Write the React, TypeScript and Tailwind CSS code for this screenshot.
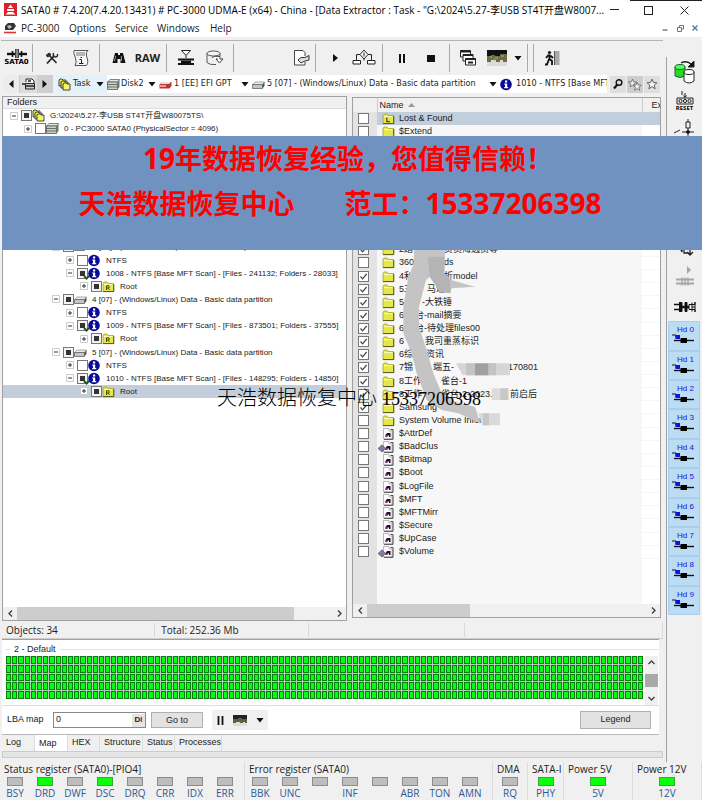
import { ReactNode, useState } from "react";

type Check = "off" | "on" | "partial";
type IconName = "files" | "disk" | "drive" | "info" | "root" | "folder" | "lost" | "file" | "fileStream";

type TreeRow = {
  level: number;
  open: boolean;
  check: Check;
  mark?: boolean;
  icon: IconName;
  text: string;
  selected?: boolean;
};

// [text, width of the column it takes]
type NamePart = [string, number?];
type FileRow = { icon: IconName; check: Check; name: NamePart[]; selected?: boolean };

const uiFont = "font-['Open_Sans','Noto_Sans','Noto_Sans_CJK_SC',sans-serif]";
const listFont = "font-['Liberation_Sans','Noto_Sans_CJK_SC',sans-serif]";

const treeTop: TreeRow[] = [
  { level: 0, open: true, check: "partial", icon: "files", text: "G:\\2024\\5.27-李USB ST4T开盘W80075TS\\" },
  { level: 1, open: false, check: "off", icon: "disk", text: "0 - PC3000 SATA0 (PhysicalSector = 4096)" },
];

const treeBottom: TreeRow[] = [
  { level: 3, open: true, check: "partial", icon: "drive", text: "3 [07] - (Windows/Linux) Data - Basic data partition" },
  { level: 4, open: false, check: "off", icon: "info", text: "NTFS" },
  { level: 4, open: true, check: "partial", mark: true, icon: "info", text: "1008 - NTFS [Base MFT Scan] - [Files - 241132; Folders - 28033]" },
  { level: 5, open: false, check: "partial", icon: "root", text: "Root" },
  { level: 3, open: true, check: "partial", icon: "drive", text: "4 [07] - (Windows/Linux) Data - Basic data partition" },
  { level: 4, open: false, check: "off", icon: "info", text: "NTFS" },
  { level: 4, open: true, check: "partial", mark: true, icon: "info", text: "1009 - NTFS [Base MFT Scan] - [Files - 873501; Folders - 37555]" },
  { level: 5, open: false, check: "partial", icon: "root", text: "Root" },
  { level: 3, open: true, check: "partial", icon: "drive", text: "5 [07] - (Windows/Linux) Data - Basic data partition" },
  { level: 4, open: false, check: "off", icon: "info", text: "NTFS" },
  { level: 4, open: true, check: "partial", mark: true, icon: "info", text: "1010 - NTFS [Base MFT Scan] - [Files - 148295; Folders - 14850]" },
  { level: 5, open: false, check: "partial", icon: "root", text: "Root", selected: true },
];

const filesTop: FileRow[] = [
  { icon: "lost", check: "off", name: [["Lost & Found"]], selected: true },
  { icon: "folder", check: "off", name: [["$Extend"]] },
];

const filesBottom: FileRow[] = [
  { icon: "folder", check: "on", name: [["2踏", 45], ["贵员海选员等"]] },
  { icon: "folder", check: "off", name: [["360", 45], ["ds"]] },
  { icon: "folder", check: "on", name: [["4利", 45], ["折model"]] },
  { icon: "folder", check: "on", name: [["5三", 28], ["马瑞"]] },
  { icon: "folder", check: "on", name: [["5", 23], ["-大铁锤"]] },
  { icon: "folder", check: "on", name: [["6", 16], ["台-mail摘要"]] },
  { icon: "folder", check: "on", name: [["6", 16], ["台-待处理files00"]] },
  { icon: "folder", check: "on", name: [["6", 26], ["我司重蒸标识"]] },
  { icon: "folder", check: "on", name: [["6综", 27], ["资讯"]] },
  { icon: "folder", check: "on", name: [["7锦", 34], ["端五-", 75], ["170801"]] },
  { icon: "folder", check: "on", name: [["8工作", 42], ["雀台-1"]] },
  { icon: "folder", check: "on", name: [["8工作", 42], ["雀台-2-2023.1", 69], ["前启后"]] },
  { icon: "folder", check: "on", name: [["Samsung"]] },
  { icon: "folder", check: "off", name: [["System Volume Inform"]] },
  { icon: "file", check: "off", name: [["$AttrDef"]] },
  { icon: "fileStream", check: "off", name: [["$BadClus"]] },
  { icon: "file", check: "off", name: [["$Bitmap"]] },
  { icon: "file", check: "off", name: [["$Boot"]] },
  { icon: "file", check: "off", name: [["$LogFile"]] },
  { icon: "file", check: "off", name: [["$MFT"]] },
  { icon: "file", check: "off", name: [["$MFTMirr"]] },
  { icon: "file", check: "off", name: [["$Secure"]] },
  { icon: "file", check: "off", name: [["$UpCase"]] },
  { icon: "fileStream", check: "off", name: [["$Volume"]] },
];

const registers: { title: string; leds: [string, boolean][] }[] = [
  {
    title: "Status register (SATA0)-[PIO4]",
    leds: [["BSY", false], ["DRD", true], ["DWF", false], ["DSC", true], ["DRQ", false], ["CRR", false], ["IDX", false], ["ERR", false]],
  },
  {
    title: "Error register (SATA0)",
    leds: [["BBK", false], ["UNC", false], ["", false], ["INF", false], ["", false], ["ABR", false], ["TON", false], ["AMN", false]],
  },
  { title: "DMA", leds: [["RQ", false]] },
  { title: "SATA-I", leds: [["PHY", true]] },
  { title: "Power 5V", leds: [["5V", true]] },
  { title: "Power 12V", leds: [["12V", true]] },
];

const indents = ["pl-[7px]", "pl-[21px]", "pl-[35px]", "pl-[49px]", "pl-[63px]", "pl-[77px]"];

function FolderShape() {
  return (
    <>
      <path d="M1 3.5 L2 2 H5 L6 3.5 H11.5 V11.5 H1 Z" fill="#e4e64a" stroke="#a3a32a" strokeWidth="0.8" />
      <path d="M2 4.6 H10.6" stroke="#fbfcb4" />
      <path d="M1 11.6 H11.8 V4" stroke="#55551c" fill="none" />
    </>
  );
}

function RowIcon({ name }: { name: IconName }) {
  return (
    <svg viewBox="0 0 13 13" className="h-[13px] w-[13px] shrink-0 overflow-visible">
      {name === "files" && (
        <>
          <path d="M1 2 L2 1 H4 L5 2 H8 V8 H1 Z" fill="#e4e64a" stroke="#333" strokeWidth="0.9" />
          <path d="M3 4 L4 3 H6 L7 4 H10 V10 H3 Z" fill="#e4e64a" stroke="#333" strokeWidth="0.9" />
          <path d="M5 6 L6 5 H8 L9 6 H12 V12 H5 Z" fill="#f4f56a" stroke="#333" strokeWidth="0.9" />
        </>
      )}
      {name === "disk" && (
        <>
          <path d="M3 1.5 H12.5 L10.5 4 H0.5 Z" fill="#e2eee0" stroke="#666" strokeWidth="0.8" />
          <path d="M0.5 4 H10.5 V11.5 H0.5 Z" fill="#c5d3c3" stroke="#555" strokeWidth="0.8" />
          <path d="M10.5 4 L12.5 1.5 V9 L10.5 11.5 Z" fill="#6f7d6d" />
          <path d="M0.5 6.5 H10.5 M0.5 9 H10.5" stroke="#555" strokeWidth="0.8" />
        </>
      )}
      {name === "drive" && (
        <>
          <path d="M3 4 H12.5 L10.5 6.5 H0.5 Z" fill="#ececec" stroke="#888" strokeWidth="0.7" />
          <path d="M0.5 6.5 H10.5 V10.5 H0.5 Z" fill="#c4c4c4" stroke="#666" strokeWidth="0.8" />
          <path d="M10.5 6.5 L12.5 4 V8 L10.5 10.5 Z" fill="#555" />
        </>
      )}
      {name === "info" && (
        <>
          <circle cx="6" cy="6.5" r="5.8" fill="#0a0a9a" />
          <path d="M5 2.6 H7.2 V4.4 H5 Z M4.2 5.4 H7.2 V9 H8.2 V10.2 H4.2 V9 H5 V6.6 H4.2 Z" fill="#fff" />
        </>
      )}
      {(name === "folder" || name === "root" || name === "lost") && <FolderShape />}
      {name === "root" && <path d="M4.5 10 V5.8 H7 V8 H4.5 M6 8 L7.6 10" stroke="#4a4a00" fill="none" />}
      {name === "lost" && <path d="M4.8 5.5 V9.6 H7.8" stroke="#4a4a00" strokeWidth="1.2" fill="none" />}
      {(name === "file" || name === "fileStream") && (
        <>
          <path d="M1.5 1.5 H7 V4 H10 V12 H1.5 Z" fill="#fff" stroke="#aaa" strokeWidth="0.8" />
          <path d="M8.5 2.5 H11 V12.3 H2" fill="none" stroke="#444" />
          <path d="M3.5 10 V8 L5 6 H8.5 V10 H7 V8.5 H5.5 V10 Z" fill="#33052e" />
          <path d="M3 8 H4.6 V10 H3 Z" fill="#b54ac0" />
        </>
      )}
      {name === "fileStream" && <path d="M-4 8.5 L0 4.8 L3.5 8.5 L0 12 Z" fill="#7d7fa6" stroke="#444" strokeWidth="0.6" />}
    </svg>
  );
}

function CheckBox({ state, label, mark }: { state: Check; label: string; mark?: boolean }) {
  const [value, setValue] = useState<Check>(state);
  return (
    <span className="grid h-[11px] w-[11px] shrink-0">
      <input
        type="checkbox"
        aria-label={label}
        checked={value !== "off"}
        onChange={() => setValue(value === "off" ? "on" : "off")}
        className={
          value === "partial"
            ? "h-[11px] w-[11px] appearance-none border border-[#777] bg-[#333] shadow-[inset_0_0_0_2px_#f4f4f4] [grid-area:1/1]"
            : "h-[11px] w-[11px] appearance-none border border-[#777] bg-white [grid-area:1/1]"
        }
      />
      {value === "on" && (
        <svg viewBox="0 0 11 11" className="pointer-events-none h-[11px] w-[11px] [grid-area:1/1]">
          <path d="M2.5 5.5 L4.6 7.8 L8.6 3" fill="none" stroke="#444" strokeWidth="1.2" />
        </svg>
      )}
      {mark && (
        <svg viewBox="0 0 11 11" className="pointer-events-none h-[11px] w-[11px] overflow-visible [grid-area:1/1]">
          <path d="M7 8 L9.5 10.5 L12 8" fill="none" stroke="#1d5b1d" strokeWidth="2" />
        </svg>
      )}
    </span>
  );
}

function TreeItem({ row }: { row: TreeRow }) {
  return (
    <li
      className={`flex min-w-0 items-center overflow-hidden whitespace-nowrap ${indents[row.level]} ${
        row.selected ? "bg-[#c2cedb]" : ""
      }`}
    >
      <button type="button" aria-label={row.open ? "Collapse" : "Expand"} className="mr-[3px] h-2 w-2 shrink-0">
        <svg viewBox="0 0 8 8" className="h-2 w-2">
          <path d="M0.5 0.5 H7.5 V7.5 H0.5 Z" fill="#fff" stroke="#ccc" />
          <path d={row.open ? "M2 4 H6" : "M2 4 H6 M4 2 V6"} stroke="#333" />
        </svg>
      </button>
      <CheckBox state={row.check} label={row.text} mark={row.mark} />
      <RowIcon name={row.icon} />
      <span className="ml-[5px]">{row.text}</span>
    </li>
  );
}

function FileItem({ row }: { row: FileRow }) {
  return (
    <tr>
      <td className="bg-[#e3e3e3] p-0">
        <div className="flex pl-[5px]">
          <CheckBox state={row.check} label={row.name[0][0]} />
        </div>
      </td>
      <td className={row.selected ? "bg-[#c2cedb] p-0" : "bg-[#f7f7f7] p-0"}>
        <div className="flex h-[13px] items-center overflow-hidden pl-[5px] whitespace-nowrap">
          <RowIcon name={row.icon} />
          <span className="ml-1 flex">
            {row.name.map(([text, width]) => (
              <span key={text} style={{ width }}>
                {text}
              </span>
            ))}
          </span>
        </div>
      </td>
      <td className={row.selected ? "bg-[#c2cedb] p-0" : "border-b border-[#f3f7fa] bg-white p-0"} />
    </tr>
  );
}

function ToolGroup({ children }: { children: ReactNode }) {
  return <div className="flex h-7 shrink-0 items-center border-r border-[#a8a8a8] px-1">{children}</div>;
}

function Tool({ label, children }: { label: string; children: ReactNode }) {
  return (
    <button type="button" aria-label={label} className="flex h-6 w-[29px] items-center justify-center">
      {children}
    </button>
  );
}

function Glyph({ children }: { children: ReactNode }) {
  return (
    <svg viewBox="0 0 20 20" className="h-5 w-5 overflow-visible" fill="none" stroke="#222">
      {children}
    </svg>
  );
}

function Caret() {
  return (
    <svg viewBox="0 0 8 5" className="h-[5px] w-2 shrink-0">
      <path d="M0.5 0 H7.5 L4 4.5 Z" fill="#111" />
    </svg>
  );
}

function Picture() {
  return (
    <svg viewBox="0 0 20 16" className="h-4 w-5">
      <path d="M0 0 H20 V12 H0 Z" fill="#111" />
      <path d="M0 6 H4 V5 H8 V6 H13 V4 H20 V13 H0 Z" fill="#6d6b48" />
      <path d="M0 12 H4 V10 H9 V12 H13 V10 H16 V12 H20 V16 H0 Z" fill="#dcdcd4" />
      <path d="M3 7 H5 M8 8 H11 M14 6 H17 M6 10 H8" stroke="#b5b285" />
    </svg>
  );
}

function PathArrow() {
  return (
    <button type="button" aria-label="Open list" className="flex h-4 w-[14px] shrink-0 items-center justify-center">
      <Caret />
    </button>
  );
}

function Toolbar() {
  return (
    <div className="mt-[3px] ml-[1px] flex h-[34px] shrink-0 items-center overflow-hidden border-t border-[#b4b4b4] pt-[1px]">
      <div className="flex h-7 w-[32px] shrink-0 items-center border-r border-[#a8a8a8]">
        <button type="button" className="flex w-[31px] flex-col items-center">
          <svg viewBox="0 0 22 9" className="h-[9px] w-[22px]">
            <path d="M1 5 H21" stroke="#111" strokeWidth="2.4" />
            <path d="M6.5 2 V8 M15.5 2 V8" stroke="#111" strokeWidth="1.6" />
            <path d="M9.5 0 H12.5 V9 H9.5 Z" stroke="#444" fill="#888" />
          </svg>
          <span className="font-['DejaVu_Sans',sans-serif] text-[7px] leading-[9px] font-bold text-black">SATA0</span>
        </button>
      </div>
      <ToolGroup>
        <Tool label="Settings">
          <Glyph>
            <path d="M5 15.5 L12 8" strokeWidth="1.8" />
            <path d="M14.5 15 L7.5 7.5" strokeWidth="1.6" />
            <path d="M4 7.5 L7 5 L9 6.5 L6 9 Z" fill="#333" />
            <path d="M11.5 5 Q10.5 8 13 9 Q16 9 15.5 6" strokeWidth="1.3" />
          </Glyph>
        </Tool>
        <Tool label="Script information">
          <Glyph>
            <path d="M3 2.5 H17 Q14.5 4 15.5 8 Q18 14 15.5 17.5 H4 Q6 15 4.5 10 Q2 5 3 2.5 Z" fill="#f6f6f6" stroke="#555" />
            <path d="M5 5 H14 M5 7 H14" stroke="#777" />
            <path d="M8.5 11.5 H10.5 V15.5 M8 15.5 H12.5 M9.5 9.5 H11" />
          </Glyph>
        </Tool>
      </ToolGroup>
      <ToolGroup>
        <Tool label="Search">
          <Glyph>
            <path d="M6 5 H9 V7 H11 V5 H14 L16.5 15 H11.5 V11 H8.5 V15 H3.5 Z" fill="#111" stroke="none" />
            <path d="M5.5 13 L6.8 8 M12.5 13 L12.3 8" stroke="#bbb" strokeWidth="0.8" />
          </Glyph>
        </Tool>
        <button type="button" className="flex h-6 w-[29px] items-center justify-center text-[11px] font-bold text-[#222]">
          RAW
        </button>
      </ToolGroup>
      <ToolGroup>
        <Tool label="Exchange">
          <Glyph>
            <path d="M5.5 2.5 H14.5 L10 7.5 Z" fill="#fff" />
            <path d="M10 7.5 V10" />
            <path d="M2 11.5 H18 M2 16 H18" stroke="#111" strokeWidth="2.2" />
            <path d="M5 13.8 H15" stroke="#111" strokeWidth="2.4" />
          </Glyph>
        </Tool>
        <Tool label="Copy disk">
          <Glyph>
            <ellipse cx="8.5" cy="5.5" rx="6.5" ry="2.5" fill="#f6f6f6" stroke="#555" />
            <path d="M2 5.5 V14.5 Q5 17 9 16.5 H11 M15 5.5 V8" stroke="#555" />
            <path d="M7 9.5 Q9 7.5 15 8.5 V11 H18 L14.5 15 L11 11 H13" fill="#fff" stroke="#444" />
          </Glyph>
        </Tool>
      </ToolGroup>
      <div className="flex h-7 w-[82px] shrink-0 items-center justify-end border-r border-[#a8a8a8]">
        <Tool label="Export">
          <Glyph>
            <path d="M14 8 V4.5 L12 2.5 H3.5 V17 H14 V14" fill="#fff" stroke="#444" />
            <path d="M7 12 L10 9.5 H14 L18 7.5 V12 L14 13 L10 15 Z" fill="#ddd" stroke="#333" />
          </Glyph>
        </Tool>
      </div>
      <ToolGroup>
        <Tool label="Start">
          <Glyph>
            <path d="M8 6 L13 10 L8 14 Z" fill="#111" stroke="none" />
          </Glyph>
        </Tool>
        <Tool label="Task map">
          <Glyph>
            <path d="M10 2 L14 6.5 L10 11 L6 6.5 Z" fill="#fff" />
            <path d="M10 4.5 V8.5 M10 11 V12.5 M6 6.5 H2.5 V12 M14 6.5 H17.5 V12" />
            <path d="M-1 12.5 H6.5 V16 H-1 Z M13.5 12.5 H21 V16 H13.5 Z" fill="#fff" />
          </Glyph>
        </Tool>
      </ToolGroup>
      <ToolGroup>
        <Tool label="Pause">
          <Glyph>
            <path d="M8 6 V15 M12 6 V15" stroke="#111" strokeWidth="2" />
          </Glyph>
        </Tool>
        <Tool label="Stop">
          <Glyph>
            <path d="M6 7 H14 V14 H6 Z" fill="#111" stroke="none" />
          </Glyph>
        </Tool>
      </ToolGroup>
      <div className="flex h-7 shrink-0 items-center border-r border-[#a8a8a8] pr-[2px] pl-[3px]">
        <Tool label="Windows">
          <Glyph>
            <path d="M2.5 2.5 H12.5 V9 H2.5 Z" fill="#fff" />
            <path d="M2.5 3.5 H12.5" strokeWidth="2" />
            <path d="M5 6.5 H15 V13 H5 Z" fill="#fff" />
            <path d="M5 7 H15" strokeWidth="2" />
            <path d="M7.5 10.5 H17.5 V17 H7.5 Z" fill="#fff" />
            <path d="M7.5 11 H17.5 M10 14.5 H15" strokeWidth="2" />
          </Glyph>
        </Tool>
        <Tool label="Picture">
          <Picture />
        </Tool>
        <PathArrow />
      </div>
      <div className="ml-[5px] flex h-7 items-center border-l border-[#a8a8a8] px-[3px]">
        <Tool label="Exit">
          <Glyph>
            <path d="M12.5 3 H17.5 V17 H12.5 Z" fill="#a9a9a9" stroke="none" />
            <path d="M12.5 3 V17" stroke="#555" />
            <circle cx="7.5" cy="4.5" r="1.6" fill="#111" stroke="none" />
            <path d="M7.5 6.5 V11 L10 13 V17 M7 11 L5 16.5 H3 M4 10 L6 7.5 L9 8 L11 10" stroke="#111" strokeWidth="1.8" />
          </Glyph>
        </Tool>
      </div>
    </div>
  );
}

function PathBar() {
  return (
    <nav className="ml-[3px] flex h-[20px] shrink-0 items-center font-['DejaVu_Sans_Condensed','Open_Sans',sans-serif] text-[9px] whitespace-nowrap text-[#222]">
      <button type="button" aria-label="Back" className="flex h-[18px] w-[17px] shrink-0 items-center justify-center border-r border-[#ccc] bg-[#ececec]">
        <svg viewBox="0 0 6 8" className="h-2 w-[6px]">
          <path d="M5.5 0 V8 L1 4 Z" fill="#111" />
        </svg>
      </button>
      <button type="button" aria-label="Go up" className="flex h-[18px] w-[17px] shrink-0 items-center justify-center bg-[#dcdcdc]">
        <svg viewBox="0 0 14 12" className="h-3 w-[14px]" fill="none" stroke="#222">
          <path d="M4 4 V1 H10 L12 3 V5" fill="#fff" />
          <path d="M3.5 5.5 H12.5 V11 H3.5 Z" fill="#ccc" />
          <path d="M0 6 H3 M4 8 H12 M6 3 H9" strokeWidth="1.4" />
        </svg>
      </button>
      <button type="button" aria-label="Forward" className="flex h-[18px] w-4 shrink-0 items-center justify-center bg-[#cfcfcf]">
        <svg viewBox="0 0 6 8" className="h-2 w-[6px]">
          <path d="M0.5 0 V8 L5 4 Z" fill="#111" />
        </svg>
      </button>
      <div className="ml-[3px] flex h-[18px] min-w-0 flex-1 items-center overflow-hidden bg-white">
        <div className="flex h-full w-[51px] shrink-0 items-center bg-[#e3f1fb] pl-[2px]">
          <RowIcon name="files" />
          <span className="flex-1 pl-[2px]">Task</span>
          <PathArrow />
        </div>
        <div className="flex w-[52px] shrink-0 items-center">
          <RowIcon name="disk" />
          <span className="flex-1 pl-[1px]">Disk2</span>
          <PathArrow />
        </div>
        <div className="flex w-[93px] shrink-0 items-center">
          <svg viewBox="0 0 13 13" className="h-[13px] w-[13px] shrink-0">
            <path d="M3 4 H12.5 V8 L10.5 10.5 H0.5 V6.5 Z" fill="#b33" />
            <path d="M3 4 H12 L10 6 H1 Z" fill="#e8dede" />
            <path d="M1 7 H7 V9 H1 Z" fill="#e99" />
          </svg>
          <span className="flex-1 pl-[2px]">1 [EE] EFI GPT</span>
          <PathArrow />
        </div>
        <div className="flex w-[248px] shrink-0 items-center">
          <RowIcon name="drive" />
          <span className="flex-1 pl-[2px]">5 [07] - (Windows/Linux) Data - Basic data partition</span>
          <PathArrow />
        </div>
        <RowIcon name="info" />
        <span className="pl-[3px]">1010 - NTFS [Base MFT Scan]</span>
      </div>
      <div className="mr-[3px] ml-[3px] flex shrink-0 gap-[1px]">
        <button type="button" aria-label="Find" className="flex h-[17px] w-4 items-center justify-center bg-[#dedede]">
          <svg viewBox="0 0 12 12" className="h-3 w-3" fill="none" stroke="#111">
            <circle cx="7" cy="4.5" r="2.8" strokeWidth="1.4" />
            <path d="M5 7 L2 10.5" strokeWidth="2.2" />
          </svg>
        </button>
        <button type="button" aria-label="Bookmarks" className="flex h-[17px] w-4 items-center justify-center bg-[#cdcdcd]">
          <svg viewBox="0 0 14 13" className="h-[13px] w-[14px]" fill="#eee" stroke="#666" strokeWidth="0.8">
            <path d="M4.5 1 L5.6 3.8 L8.6 4 L6.2 5.9 L7 8.8 L4.5 7.2 L2 8.8 L2.8 5.9 L0.4 4 L3.4 3.8 Z" />
            <path d="M9.2 4.4 L10.3 7 L13.4 7.2 L11 9.2 L11.8 12.2 L9.2 10.6 L6.6 12.2 L7.4 9.2 L5 7.2 L8 7 Z" />
          </svg>
        </button>
        <button type="button" aria-label="Add bookmark" className="flex h-[17px] w-4 items-center justify-center bg-[#dedede]">
          <svg viewBox="0 0 12 12" className="h-3 w-3" fill="#f4f4f4" stroke="#666">
            <path d="M6 1 L7.4 4.5 L11 4.7 L8.2 7 L9.2 10.8 L6 8.7 L2.8 10.8 L3.8 7 L1 4.7 L4.6 4.5 Z" />
          </svg>
        </button>
      </div>
    </nav>
  );
}

function ScrollX({ thumb }: { thumb: string }) {
  return (
    <div className="flex h-[13px] items-center bg-[#f0f0f0]">
      <button type="button" aria-label="Scroll left" className="flex h-[13px] w-[14px] items-center justify-center">
        <svg viewBox="0 0 5 7" className="h-[7px] w-[5px]" fill="none" stroke="#444" strokeWidth="1.4">
          <path d="M4 0.5 L1 3.5 L4 6.5" />
        </svg>
      </button>
      <div className="h-full flex-1">
        <div className={`h-full bg-[#cdcdcd] ${thumb}`} />
      </div>
      <button type="button" aria-label="Scroll right" className="flex h-[13px] w-[14px] items-center justify-center">
        <svg viewBox="0 0 5 7" className="h-[7px] w-[5px]" fill="none" stroke="#444" strokeWidth="1.4">
          <path d="M1 0.5 L4 3.5 L1 6.5" />
        </svg>
      </button>
    </div>
  );
}

function FoldersPanel() {
  return (
    <section className="flex min-w-0 flex-col border border-[#a0a0a0] bg-white">
      <h2 className="h-[12px] border-b border-[#ddd] bg-[#f0f0f0] pl-1 leading-[11px]">Folders</h2>
      <ul className="grid h-[289px] grid-rows-[repeat(22,minmax(0,1fr))] text-[8px]">
        {treeTop.map((row) => (
          <TreeItem key={row.text} row={row} />
        ))}
        <li className="row-span-8" aria-hidden="true" />
        {treeBottom.map((row, i) => (
          <TreeItem key={i} row={row} />
        ))}
      </ul>
      <div className="flex-1" />
      <ScrollX thumb="w-[88%]" />
    </section>
  );
}

function FilesPanel() {
  return (
    <section className="relative mt-[1px] mb-[3px] flex min-w-0 flex-col border border-[#a0a0a0] bg-[#f7f7f7]">
      <table className="h-[461px] w-full table-fixed border-collapse">
        <colgroup>
          <col className="w-[24px]" />
          <col />
          <col className="w-[18px]" />
        </colgroup>
        <thead>
          <tr className="h-[14px] bg-[#f0f0f0] text-left">
            <th className="border-r border-[#ccc] p-0" />
            <th className="border-r border-[#ccc] p-0 pl-[2px] font-normal">
              <span className="flex items-center gap-1">
                Name
                <svg viewBox="0 0 7 4" className="h-1 w-[7px]">
                  <path d="M3.5 0 L7 4 H0 Z" fill="#999" />
                </svg>
              </span>
            </th>
            <th className="overflow-hidden p-0 pl-[9px] font-normal whitespace-nowrap">Ext</th>
          </tr>
        </thead>
        <tbody>
          {filesTop.map((row) => (
            <FileItem key={row.name[0][0]} row={row} />
          ))}
          <tr className="h-[105px]">
            <td className="bg-[#e3e3e3] p-0" />
            <td className="p-0" />
            <td className="bg-white p-0" />
          </tr>
          {filesBottom.map((row, i) => (
            <FileItem key={i} row={row} />
          ))}
        </tbody>
      </table>
      <div className="flex flex-1">
        <div className="w-[24px] bg-[#e3e3e3]" />
        <div className="flex-1" />
        <div className="w-[18px] bg-white" />
      </div>
      <ScrollX thumb="w-[37%]" />
      {/* brush strokes over parts of the names */}
      <svg viewBox="0 0 330 540" className="pointer-events-none absolute top-[152px] left-[48px] h-[180px] w-[110px]">
        <path
          d="M40 0 H132 L130 70 L150 90 L222 110 L152 115 L147 130 L117 125 L87 80 L75 90 L54 170 L54 230 L77 300 L97 370 L122 430 L162 455 L222 470 L238 520 L172 490 L122 480 L77 450 L47 370 L32 310 L7 250 L7 170 L22 80 L37 45 Z"
          fill="#c4c4c4"
        />
        <path d="M80 20 H130 V70 L148 92 V130 L117 125 L87 82 Z" fill="#b4b4b4" />
        <path d="M165 340 H327 V376 H185 Z" fill="#d6d6d6" />
        <path d="M195 340 H222 V376 H195 Z M262 340 H285 V376 H262 Z" fill="#c4c4c4" />
        <path d="M222 340 H262 V376 H222 Z" fill="#a0a0a0" />
        <path d="M272 415 H322 V450 H272 Z" fill="#dcdcdc" />
        <path d="M298 415 H322 V450 H298 Z" fill="#c8c8c8" />
        <path d="M232 490 H297 V526 H244 Z" fill="#dadada" />
        <path d="M246 490 H264 V526 H246 Z" fill="#c6c6c6" />
      </svg>
    </section>
  );
}

function MapPanel() {
  return (
    <section className={`mr-[4px] ml-[2px] shrink-0 border-t border-[#a0a0a0] bg-white text-[9px] text-[#222] ${listFont}`}>
      <h2 className="flex h-[16px] items-center gap-1 pt-[2px] pl-1 leading-[12px]">
        <span className="h-px w-1 bg-[#ddd]" />
        2 - Default
        <span className="h-px flex-1 bg-[#e4e4e4]" />
      </h2>
      <div className="flex h-[50px] border-b border-[#ddd] pl-1">
        <div className="grid h-[43px] min-w-0 flex-1 grid-cols-[repeat(103,minmax(0,1fr))] grid-rows-5 gap-px bg-[#b9c9b9]">
          {Array.from({ length: 515 }, (_, i) => (
            <span key={i} className="border border-[#0a7d10] bg-[#00ff10]" />
          ))}
        </div>
        <div className="ml-[2px] flex w-[13px] flex-col items-center justify-between bg-[#f0f0f0] py-1">
          <svg viewBox="0 0 7 5" className="h-[5px] w-[7px]" fill="none" stroke="#444" strokeWidth="1.4">
            <path d="M0.5 4 L3.5 1 L6.5 4" />
          </svg>
          <span className="h-[13px] w-full bg-[#a9a9a9]" />
          <svg viewBox="0 0 7 5" className="h-[5px] w-[7px]" fill="none" stroke="#444" strokeWidth="1.4">
            <path d="M0.5 1 L3.5 4 L6.5 1" />
          </svg>
        </div>
        <div className="w-[1px]" />
      </div>
      <div className="flex h-[29px] items-center border-b border-[#b8b8b8] pr-2 pl-[5px]">
        <label htmlFor="lba" className="w-[46px]">
          LBA map
        </label>
        <div className="flex h-4 w-[93px] items-center border border-[#888] bg-white">
          <input id="lba" defaultValue="0" className="min-w-0 flex-1 pl-[2px] outline-none" />
          <button type="button" className="flex h-[13px] w-[13px] items-center justify-center bg-[#e4e4e4] text-[8px] font-bold">
            D<span className="text-[#d00]">I</span>
          </button>
        </div>
        <button type="button" className="ml-[5px] h-4 w-[52px] border border-[#b0b0b0] bg-[#e2e2e2] leading-[13px]">
          Go to
        </button>
        <div className="ml-[9px] flex h-5 w-[56px] items-center justify-around bg-[#f0f0f0]">
          <button type="button" aria-label="Pause map">
            <svg viewBox="0 0 7 9" className="h-[9px] w-[7px]">
              <path d="M1.5 0 V9 M5.5 0 V9" stroke="#111" strokeWidth="1.8" />
            </svg>
          </button>
          <button type="button" aria-label="Map picture">
            <svg viewBox="0 0 14 11" className="h-[11px] w-[14px]">
              <path d="M0 0 H14 V8 H0 Z" fill="#222" />
              <path d="M0 4 H5 V3 H9 V4 H14 V9 H0 Z" fill="#5f5d42" />
              <path d="M0 8 H3 V7 H7 V8 H10 V7 H12 V8 H14 V11 H0 Z" fill="#ddd" />
            </svg>
          </button>
          <Caret />
        </div>
        <button type="button" className="ml-auto h-[18px] w-[71px] border border-[#b0b0b0] bg-[#e2e2e2]">
          Legend
        </button>
      </div>
    </section>
  );
}

const tabs: [string, string][] = [
  ["Log", "w-[33px]"],
  ["Map", "w-[33px]"],
  ["HEX", "w-[32px]"],
  ["Structure", "w-[43px]"],
  ["Status", "w-[32px]"],
  ["Processes", "w-[47px]"],
];

function Tabs() {
  const [active, setActive] = useState("Map");
  return (
    <div role="tablist" className={`ml-[2px] flex h-4 shrink-0 text-[9px] ${listFont}`}>
      {tabs.map(([name, width]) => (
        <button
          key={name}
          type="button"
          role="tab"
          aria-selected={active === name}
          onClick={() => setActive(name)}
          className={`border-r border-[#ddd] pl-1 text-left ${width} ${
            active === name ? "bg-white pt-[2px]" : "bg-[#f0f0f0]"
          }`}
        >
          {name}
        </button>
      ))}
    </div>
  );
}

function SideBar() {
  return (
    <aside className="mt-[20px] w-9 shrink-0 border-l border-[#a0a0a0]">
      <div className="grid h-[558px] grid-rows-[repeat(19,minmax(0,1fr))]">
        <button type="button" aria-label="Switch drive" className="flex items-center justify-center">
          <svg viewBox="0 0 22 26" className="h-[26px] w-[22px]" fill="none" stroke="#222">
            <path d="M1 8 V17 Q6 20 11 17 V8" fill="#22dd22" stroke="#163" />
            <ellipse cx="6" cy="8" rx="5" ry="2.5" fill="#5f5" stroke="#163" />
            <path d="M10 13 V22 Q15 26 20 22 V13" fill="#fff" />
            <ellipse cx="15" cy="13" rx="5" ry="2.5" fill="#fff" />
            <path d="M7 4 Q12 1 17 5" strokeWidth="1.4" />
            <path d="M20 2 V8 H14 Z" fill="#111" />
          </svg>
        </button>
        <button type="button" className="flex flex-col items-center justify-center">
          <svg viewBox="0 0 18 14" className="h-[14px] w-[18px]" fill="none" stroke="#222">
            <path d="M6 0 V4 M9 2 V6 M7.5 4.5 L9 6.5 L10.5 4.5" />
            <path d="M1 7 H17 V13 H1 Z" />
            <circle cx="4.5" cy="10" r="1.6" />
            <circle cx="9" cy="10" r="1.6" />
            <circle cx="13.5" cy="10" r="1.6" />
          </svg>
          <span className="text-[6px] leading-[7px] font-bold text-black">RESET</span>
        </button>
        <button type="button" aria-label="Power" className="flex items-center justify-center">
          <svg viewBox="0 0 22 22" className="h-[22px] w-[22px]" fill="none" stroke="#222">
            <path d="M14 0 V3 M12 3 H16 V9 H12 Z M14 9 V18 M0 14 L6 11 M8 13 H20" />
            <circle cx="14" cy="13" r="1.5" fill="#111" />
          </svg>
        </button>
        <div className="row-span-3" />
        <button type="button" aria-label="Move down" className="flex items-center justify-center">
          <svg viewBox="0 0 20 20" className="h-5 w-5" fill="none" stroke="#222">
            <path d="M3 6 L7 14 V6 M9 6 V15 H14 M15 6 V16 M12 14 L15 17 L18 14" strokeWidth="1.3" />
          </svg>
        </button>
        <button type="button" aria-label="Connect" className="flex items-center justify-center">
          <svg viewBox="0 0 20 22" className="h-[22px] w-5" stroke="#a5a5a5">
            <path d="M12 0 V8 L16 4 Z" fill="#a5a5a5" stroke="none" />
            <path d="M1 13.5 H19 M1 17.5 H19" strokeWidth="2" />
            <path d="M7 11.5 V19.5 M10 11.5 V19.5 M13 11.5 V19.5" strokeWidth="1.4" />
          </svg>
        </button>
        <button type="button" aria-label="Adapter" className="flex items-center justify-center">
          <svg viewBox="0 0 22 12" className="h-3 w-[22px]" fill="none" stroke="#111">
            <path d="M0 3.5 H6 M0 8.5 H6" strokeWidth="1.6" />
            <path d="M5 1.5 H8 V10.5 H5 M11 1.5 H13 V10.5 H11 Z" fill="#111" />
            <path d="M8 6 H15" strokeWidth="2.4" />
            <path d="M15 3.5 H21 V1 V11 V8.5 H15 Z M18 1.5 V10.5 M18 6 H21" />
          </svg>
        </button>
        {Array.from({ length: 10 }, (_, i) => (
          <button
            key={i}
            type="button"
            className="mr-[2px] ml-[1px] flex flex-col items-end border border-[#a9cdea] bg-[#bcdcf4] pt-[3px] pr-[5px] font-['Liberation_Sans',sans-serif] text-[8px] leading-[9px] text-[#1111e0]"
          >
            Hd {i}
            <svg viewBox="0 0 22 10" className="h-[10px] w-[22px]">
              <path d="M0 1 H4 V4 H8" stroke="#111" fill="none" />
              <path d="M3.5 1 H8 V5 H3.5 Z" fill="#1111e0" />
              <path d="M2 6.5 H22" stroke="#111" strokeWidth="1.4" />
              <path d="M8.5 4 H15 V9 H8.5 Z" fill="#000" />
            </svg>
          </button>
        ))}
      </div>
    </aside>
  );
}

function Registers() {
  return (
    <footer className="grid h-[38px] shrink-0 grid-cols-[245fr_248fr_35fr_36fr_69fr_69fr] text-[10px]">
      {registers.map((group) => (
        <section key={group.title} className="min-w-0 border-r border-[#ddd]">
          <h2 className="pl-1 leading-[14px] whitespace-nowrap">{group.title}</h2>
          <ul className={group.leds.length > 1 ? "flex" : "flex justify-center"}>
            {group.leds.map(([name, on], i) => (
              <li key={i} className="flex w-[30px] flex-col items-center">
                <span
                  className={`mt-[1px] h-[9px] w-4 border ${on ? "border-[#3a3] bg-[#0bff0b]" : "border-[#8c8c8c] bg-[#bdbdbd]"}`}
                />
                <span className="leading-[14px] text-[#2d5a94]">{name}</span>
              </li>
            ))}
          </ul>
        </section>
      ))}
    </footer>
  );
}

export default function App() {
  return (
    <div className={`relative flex min-h-screen flex-col overflow-hidden bg-[#f0f0f0] text-[#222] ${uiFont}`}>
      <header className="bg-white">
        <div className="flex h-[19px] items-center pl-[4px]">
          <svg viewBox="0 0 13 13" className="h-[13px] w-[13px] shrink-0">
            <path d="M0 0 H13 V13 H0 Z" fill="#d8232a" />
            <path d="M6.5 1.5 L9 5 H4 Z M3 6 H10 V8 H3 Z M1.5 11.5 L4 9 H9 L11.5 11.5 Z" fill="#fff" />
          </svg>
          <h1 className="ml-[4px] min-w-0 flex-1 overflow-hidden text-[10px] leading-[18px] whitespace-nowrap text-black">
            SATA0 # 7.4.20(7.4.20.13431) # PC-3000 UDMA-E (x64) - China - [Data Extractor : Task - "G:\2024\5.27-李USB ST4T开盘W8007...
          </h1>
          <button type="button" aria-label="Minimize" className="flex h-full w-6 items-center pl-1">
            <span className="h-px w-[9px] bg-[#222]" />
          </button>
          <button type="button" aria-label="Maximize" className="flex h-full w-9 items-center justify-center border-t border-[#222]">
            <span className="h-[9px] w-[9px] border border-[#222]" />
          </button>
          <button type="button" aria-label="Close" className="flex h-full w-9 items-center justify-center border-t border-[#222]">
            <svg viewBox="0 0 9 9" className="h-[9px] w-[9px]" stroke="#222">
              <path d="M0.5 0.5 L8.5 8.5 M8.5 0.5 L0.5 8.5" />
            </svg>
          </button>
        </div>
        <nav className="flex h-[18px] items-center pl-[4px] text-[10px]">
          <svg viewBox="0 0 12 12" className="h-3 w-3 shrink-0">
            <path d="M1 4 L4 1 H10 L12 4 L9 8 H1 Z" fill="#333" />
            <path d="M3 4 L6 3 L8 5 L5 7 Z" fill="#bbb" />
            <path d="M0 10.5 H12" stroke="#d33" strokeWidth="1.6" />
          </svg>
          <button type="button" className="ml-[5px] w-[48px] text-left">PC-3000</button>
          <button type="button" className="w-[46px] text-left">Options</button>
          <button type="button" className="w-[42px] text-left">Service</button>
          <button type="button" className="w-[53px] text-left">Windows</button>
          <button type="button" className="text-left">Help</button>
          <div className="ml-auto flex w-10 items-center justify-between pr-[4px]">
            <svg viewBox="0 0 6 6" className="h-[6px] w-[6px]" stroke="#5b7a99" strokeWidth="1.4">
              <path d="M0.5 5 H5.5" />
            </svg>
            <svg viewBox="0 0 7 7" className="h-[7px] w-[7px]" fill="none" stroke="#5b7a99">
              <path d="M2.5 2 V0.5 H6.5 V4 H5 M0.5 2.5 H4.5 V6.5 H0.5 Z" />
            </svg>
            <svg viewBox="0 0 6 6" className="h-[6px] w-[6px]" stroke="#5b7a99" strokeWidth="1.4">
              <path d="M0.5 0.5 L5.5 5.5 M5.5 0.5 L0.5 5.5" />
            </svg>
          </div>
        </nav>
      </header>

      <div className="flex flex-1">
        <main className="flex min-w-0 flex-1 flex-col pr-[3px]">
          <Toolbar />
          <PathBar />
          <div className={`mt-[2px] mr-[2px] ml-[2px] grid flex-1 grid-cols-[345fr_309fr] gap-x-[5px] text-[9px] leading-[13px] ${listFont}`}>
            <FoldersPanel />
            <FilesPanel />
          </div>
          <div className="ml-[2px] grid h-[18px] shrink-0 grid-cols-[153fr_154fr_155fr_198fr] items-center border-b border-[#ccc] text-[10px] leading-[14px]">
            <span className="border-r border-[#d8d8d8] pl-1">Objects: 34</span>
            <span className="border-r border-[#d8d8d8] pl-[6px]">Total: 252.36 Mb</span>
            <span className="h-[14px] border-r border-[#d8d8d8]" />
            <span className="h-[14px] border-r border-[#d8d8d8]" />
          </div>
          <MapPanel />
          <Tabs />
          <div className="mb-[4px] ml-[2px] h-[7px] shrink-0 border border-[#ccc] bg-[#e4e4e4]" />
        </main>
        <SideBar />
      </div>
      <Registers />

      {/* contact banner */}
      <div className="absolute top-[136px] right-0 left-[2px] flex h-[114px] flex-col items-center bg-[#6f92c0] pr-6 font-['Noto_Sans','Noto_Sans_CJK_SC',sans-serif] text-[27px] leading-[45px] font-bold whitespace-nowrap text-[#ff0000]">
        <p className="pl-4">
          <span className="text-[28px]">19</span>年数据恢复经验，您值得信赖！
        </p>
        <p className="flex gap-[50px]">
          <span>天浩数据恢复中心</span>
          <span>
            范工：<span className="text-[28px]">15337206398</span>
          </span>
        </p>
      </div>
      <p className="absolute top-[386px] left-[217px] font-['Liberation_Serif','Noto_Sans_CJK_SC',serif] text-[20px] leading-6 font-light whitespace-nowrap text-black">
        天浩数据恢复中心 <span className="text-[18px]">15337206398</span>
      </p>
    </div>
  );
}
